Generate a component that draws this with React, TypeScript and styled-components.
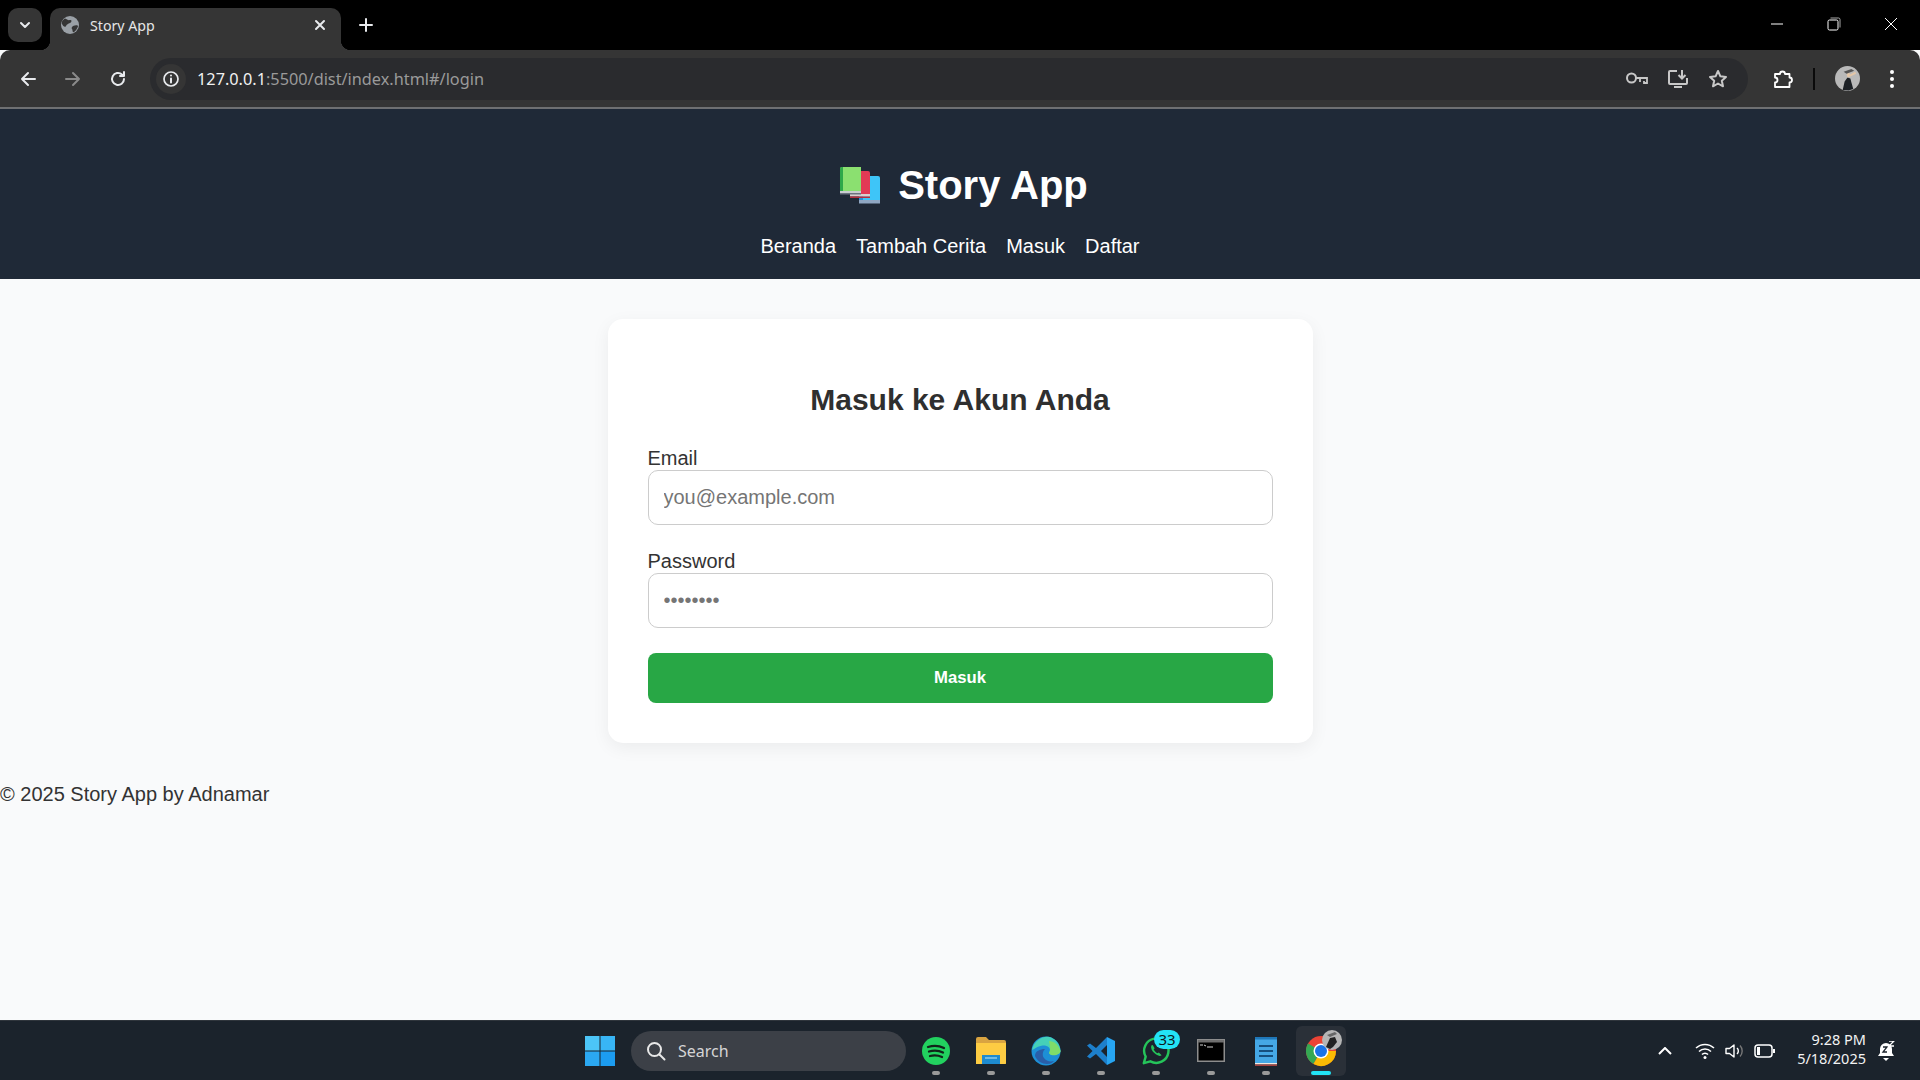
import React from "react";
import styled, { createGlobalStyle } from "styled-components";

const Global = createGlobalStyle`
  html, body { margin: 0; padding: 0; background: #f9fafb; }
  * { box-sizing: border-box; }
  body { font-family: "Liberation Sans", Arial, sans-serif; color: #333; overflow: hidden; }
`;

const Screen = styled.div`
  width: 1920px; height: 1080px; display: flex; flex-direction: column; background: #f9fafb;
`;

/* ---------- browser chrome ---------- */
const TabStrip = styled.div`
  height: 50px; flex: none; background: #000; display: flex; align-items: flex-start;
  font-family: "Noto Sans", "Open Sans", sans-serif;
`;
const TabSearch = styled.div`
  width: 34px; height: 34px; margin: 8px 0 0 8px; border-radius: 10px; background: #353535;
  display: flex; align-items: center; justify-content: center; flex: none;
`;
const Tab = styled.div`
  width: 291px; height: 42px; margin: 8px 0 0 8px; border-radius: 10px 10px 0 0; background: #353535; position: relative;
  display: flex; align-items: center; padding: 0 15px 8px 11px; color: #e6e6e6; font-size: 14.2px; gap: 11px; flex: none;
  &::before, &::after {
    content: ""; position: absolute; bottom: 0; width: 10px; height: 10px;
  }
  &::before { left: -10px; background: radial-gradient(circle at 0 0, transparent 10px, #353535 10.5px); }
  &::after { right: -10px; background: radial-gradient(circle at 100% 0, transparent 10px, #353535 10.5px); }
`;
const TabTitle = styled.span` flex: 1; `;
const NewTab = styled.div`
  width: 28px; height: 28px; margin: 11px 0 0 11px; display: flex; align-items: center; justify-content: center; flex: none;
`;
const WindowControls = styled.div`
  margin-left: auto; display: flex; height: 48px; align-items: center; padding-right: 1px;
`;
const WinBtn = styled.div`
  width: 57px; height: 48px; display: flex; align-items: center; justify-content: center;
`;

const Toolbar = styled.div`
  height: 59px; flex: none; background: #353535; border-radius: 10px 10px 0 0; border-bottom: 2px solid #6f7072;
  display: flex; align-items: center; padding: 0 26px 0 0;
`;
const NavIcon = styled.div`
  width: 45px; height: 34px; display: flex; align-items: center; justify-content: center; flex: none;
`;
const NavGroup = styled.div` display: flex; padding-left: 5px; `;
const Omnibox = styled.div`
  flex: 1; height: 42px; margin-left: 10px; background: #2a2b2e; border-radius: 21px; display: flex; align-items: center;
  font-family: "Noto Sans", "Open Sans", sans-serif; font-size: 16.3px; padding-right: 20px;
`;
const InfoChip = styled.div`
  width: 30px; height: 30px; margin-left: 6px; border-radius: 50%; background: #353535; display: flex; align-items: center; justify-content: center; flex: none;
`;
const UrlHost = styled.span` color: #f1f1f1; margin-left: 11px; `;
const UrlRest = styled.span` color: #9a9a9a; `;
const OmniActions = styled.div` margin-left: auto; display: flex; align-items: center; gap: 20px; `;
const ToolRight = styled.div` display: flex; align-items: center; flex: none; margin-left: 25px; `;
const ToolDivider = styled.div` width: 2px; height: 22px; background: #0a0a0a; margin: 0 20px; `;
const Kebab = styled.div` margin-left: 30px; display: flex; `;

/* ---------- app header ---------- */
const Header = styled.header`
  height: 170px; flex: none; background: #1f2937; color: #fff; display: flex; flex-direction: column; align-items: center; padding-top: 53px;
`;
const Brand = styled.h1`
  margin: 0; padding-left: 8px; font-size: 40px; line-height: 46px; font-weight: 700; display: flex; align-items: center; gap: 18px; color: #fff;
`;
const Nav = styled.nav`
  display: flex; gap: 20px; margin-top: 27px; padding-right: 20px;
`;
const NavLink = styled.a`
  color: #fff; font-size: 20px; line-height: 23px; text-decoration: none;
`;

/* ---------- login ---------- */
const Main = styled.main`
  display: flex; justify-content: center; padding-top: 40px; flex: none;
`;
const Card = styled.section`
  width: 705px; background: #fff; border-radius: 15px; padding: 40px; box-shadow: 0 5px 18px rgba(0,0,0,0.06);
`;
const Title = styled.h2`
  margin: 23.5px 0 30.5px; text-align: center; font-size: 30px; line-height: 34px; font-weight: 700; color: #2f2f2f;
`;
const Field = styled.div` margin-bottom: 25px; `;
const Label = styled.label` display: block; font-size: 20px; line-height: 23px; color: #333; `;
const Input = styled.input`
  display: block; width: 100%; height: 55px; padding: 0 15px; border: 1px solid #ccc; border-radius: 10px;
  font-family: "Liberation Sans", Arial, sans-serif; font-size: 20px; color: #333; background: #fff; outline: none;
  &::placeholder { color: #757575; }
`;
const Submit = styled.button`
  display: block; width: 100%; height: 50px; border: 0; border-radius: 8px; background: #28a745; color: #fff;
  font-family: "Liberation Sans", Arial, sans-serif; font-size: 16.7px; font-weight: 700;
`;
const Footer = styled.footer`
  margin-top: 39.5px; font-size: 20px; line-height: 23px; color: #333; flex: none;
`;
const Spacer = styled.div` flex: 1; `;

/* ---------- taskbar ---------- */
const Taskbar = styled.div`
  height: 60px; flex: none; background: #1b232c; border-top: 1px solid #2f353c; position: relative; display: flex; align-items: center; justify-content: center;
  font-family: "Noto Sans", "Open Sans", sans-serif;
`;
const TaskCenter = styled.div` display: flex; align-items: center; margin-left: 13.5px; `;
const StartBtn = styled.div` width: 30px; height: 30px; display: flex; margin-right: 16px; `;
const SearchPill = styled.div`
  width: 275px; height: 40px; border-radius: 20px; background: #3c4047; color: #d5d5d5; display: flex; align-items: center; gap: 12px; padding-left: 15px; font-size: 16px; margin-right: 2.5px;
`;
const AppSlot = styled.div<{ $active?: boolean }>`
  width: 50px; height: 50px; margin: 0 2.5px; position: relative; display: flex; align-items: center; justify-content: center; border-radius: 6px;
  background: ${(p) => (p.$active ? "#2a3038" : "transparent")};
`;
const AppDot = styled.span<{ $active?: boolean }>`
  position: absolute; left: 50%; bottom: 1px; transform: translateX(-50%);
  width: ${(p) => (p.$active ? "20px" : "8px")}; height: 4px; border-radius: 2px; background: ${(p) => (p.$active ? "#22e3f5" : "#9a9a9a")};
`;
const Badge = styled.span`
  position: absolute; top: 4px; right: 1px; min-width: 26px; height: 19px; border-radius: 10px; background: #23e3f5; color: #0d1b22; font-size: 15px; display: flex; align-items: center; justify-content: center;
`;
const Tray = styled.div`
  position: absolute; right: 0; top: 0; bottom: 0; display: flex; align-items: center; color: #fff; padding-right: 25px;
`;
const TrayIcons = styled.div` display: flex; align-items: center; gap: 9.5px; margin-right: 21px; `;
const Chevron = styled.div` margin-right: 23px; display: flex; `;
const Clock = styled.div` text-align: right; font-size: 14.5px; line-height: 19.500px; margin-right: 11px; color: #f3f3f3; padding-bottom: 3px; `;

const Globe = () => (
  <svg width="18" height="18" viewBox="0 0 18 18"><circle cx="9" cy="9" r="9" fill="#9aa0a6" /><path d="M4 2.500c2 1 3 2 5 1.500s2 2 0 3-3 1-4 3-3 0-4-2 1-4 3-5.500zM12 10c2-1 5-1 5 0s-2 5-4 6-1-2-2-3 0-2 1-3z" fill="#353535" /></svg>
);
const Avatar = () => (
  <svg width="25" height="25" viewBox="0 0 26 26">
    <circle cx="13" cy="13" r="13" fill="#b9b9b9" />
    <path d="M8 25l2-9 3-4 3 1 1 4 2 7-5 1.500z" fill="#1d2126" />
    <path d="M12 8l3-1 1 4-3 1zM15 9l6-3 1 2-6 3z" fill="#e3c6a8" />
    <path d="M9 6l8-3 3 2-8 3z" fill="#555" />
  </svg>
);
const Books = () => (
  <svg width="40" height="37" viewBox="0 0 40 37">
    <path d="M20 9h18a2 2 0 0 1 2 2v24H20z" fill="#3ec5f8" /><path d="M19 9h4v24h-4z" fill="#2a8fd8" /><path d="M19 33h21v3.500H19z" fill="#8fa6c2" />
    <path d="M10 4h18a2 2 0 0 1 2 2v21H10z" fill="#e23a55" /><path d="M10 27h20v2.500H10z" fill="#d8cfcf" /><path d="M10 29.500h20v1.500H10z" fill="#b32f3f" />
    <path d="M2 0h19v24H0V2a2 2 0 0 1 2-2z" fill="#8be070" /><path d="M2 0h1v24H0V2a2 2 0 0 1 2-2z" fill="#2fa84a" /><path d="M0 24h21v2H0z" fill="#c9ccd0" /><path d="M0 26h21v1.500H0z" fill="#6b7280" />
  </svg>
);
const ic = { fill: "none", stroke: "#e8eaed", strokeWidth: 2, strokeLinecap: "round" as const, strokeLinejoin: "round" as const };

export default function App() {
  return (
    <Screen>
      <Global />
      <TabStrip>
        <TabSearch><svg width="12" height="12" viewBox="0 0 12 12"><path d="M2 4l4 4 4-4" {...ic} /></svg></TabSearch>
        <Tab>
          <Globe />
          <TabTitle>Story App</TabTitle>
          <svg width="12" height="12" viewBox="0 0 12 12"><path d="M2 2l8 8M10 2l-8 8" {...ic} /></svg>
        </Tab>
        <NewTab><svg width="14" height="14" viewBox="0 0 14 14"><path d="M7 1v12M1 7h12" {...ic} /></svg></NewTab>
        <WindowControls>
          <WinBtn><svg width="14" height="14" viewBox="0 0 14 14"><path d="M1 7h12" stroke="#fff" strokeWidth="1" /></svg></WinBtn>
          <WinBtn><svg width="14" height="14" viewBox="0 0 14 14"><rect x="1" y="3" width="10" height="10" rx="1.500" fill="none" stroke="#fff" /><path d="M3.500 1h8a1.500 1.500 0 0 1 1.500 1.500v8" fill="none" stroke="#aaa" /></svg></WinBtn>
          <WinBtn><svg width="14" height="14" viewBox="0 0 14 14"><path d="M1 1l12 12M13 1L1 13" stroke="#fff" strokeWidth="1" /></svg></WinBtn>
        </WindowControls>
      </TabStrip>
      <Toolbar>
        <NavGroup>
          <NavIcon><svg width="18" height="18" viewBox="0 0 18 18"><path d="M16 9H3M9 3L3 9l6 6" {...ic} /></svg></NavIcon>
          <NavIcon><svg width="18" height="18" viewBox="0 0 18 18"><path d="M2 9h13M9 3l6 6-6 6" {...ic} stroke="#8a8a8a" /></svg></NavIcon>
          <NavIcon><svg width="18" height="18" viewBox="0 0 18 18"><path d="M15 9a6 6 0 1 1-2-4.500L15 6M15 2v4h-4" {...ic} /></svg></NavIcon>
        </NavGroup>
        <Omnibox>
          <InfoChip><svg width="18" height="18" viewBox="0 0 18 18"><circle cx="9" cy="9" r="7" {...ic} strokeWidth="1.700" /><path d="M9 8.500v4M9 5.500v.1" {...ic} /></svg></InfoChip>
          <UrlHost>127.0.0.1</UrlHost><UrlRest>:5500/dist/index.html#/login</UrlRest>
          <OmniActions>
            <svg width="22" height="14" viewBox="0 0 22 14"><circle cx="5.500" cy="6" r="4.500" fill="none" stroke="#c8c8c8" strokeWidth="2" /><path d="M10 6h11v5h-3V9M14 7v3" fill="none" stroke="#c8c8c8" strokeWidth="1.800" /></svg>
            <svg width="20" height="20" viewBox="0 0 20 20"><path d="M9 2H2a1 1 0 0 0-1 1v11a1 1 0 0 0 1 1h16a1 1 0 0 0 1-1V9M6 18h8" fill="none" stroke="#c8c8c8" strokeWidth="2" /><path d="M14 1v8M10.500 6l3.500 3.500L17.500 6" fill="none" stroke="#c8c8c8" strokeWidth="2" /></svg>
            <svg width="20" height="20" viewBox="0 0 20 20"><path d="M10 2l2.400 5.300 5.600.6-4.200 3.800 1.200 5.600L10 14.500 5 17.300l1.200-5.600L2 7.900l5.600-.6z" fill="none" stroke="#c8c8c8" strokeWidth="2" strokeLinejoin="round" /></svg>
          </OmniActions>
        </Omnibox>
        <ToolRight>
          <svg width="20" height="20" viewBox="0 0 20 20"><path d="M2 5h5a2.500 2.500 0 0 1 5 0h4.500v3.500a2.500 2.500 0 0 1 0 5V18H2v-4.500a2.500 2.500 0 0 0 0-5z" fill="none" stroke="#fff" strokeWidth="1.800" strokeLinejoin="round" /></svg>
          <ToolDivider />
          <Avatar />
          <Kebab><svg width="4" height="18" viewBox="0 0 4 18"><circle cx="2" cy="2" r="2" fill="#fff" /><circle cx="2" cy="9" r="2" fill="#fff" /><circle cx="2" cy="16" r="2" fill="#fff" /></svg></Kebab>
        </ToolRight>
      </Toolbar>

      <Header>
        <Brand><Books />Story App</Brand>
        <Nav>
          <NavLink>Beranda</NavLink>
          <NavLink>Tambah Cerita</NavLink>
          <NavLink>Masuk</NavLink>
          <NavLink>Daftar</NavLink>
        </Nav>
      </Header>

      <Main>
        <Card>
          <Title>Masuk ke Akun Anda</Title>
          <Field>
            <Label>Email</Label>
            <Input placeholder="you@example.com" readOnly />
          </Field>
          <Field>
            <Label>Password</Label>
            <Input type="password" placeholder="••••••••" readOnly />
          </Field>
          <Submit>Masuk</Submit>
        </Card>
      </Main>
      <Footer>© 2025 Story App by Adnamar</Footer>
      <Spacer />

      <Taskbar>
        <TaskCenter>
          <StartBtn><svg width="30" height="30" viewBox="0 0 30 30"><path d="M0 0h14.500v14.500H0z" fill="#4cc5f7" /><path d="M15.500 0H30v14.500H15.500z" fill="#38b5f5" /><path d="M0 15.500h14.500V30H0z" fill="#2ba8f2" /><path d="M15.500 15.500H30V30H15.500z" fill="#1c9cf0" /></svg></StartBtn>
          <SearchPill>
            <svg width="20" height="20" viewBox="0 0 20 20"><circle cx="8.500" cy="8.500" r="6.500" fill="none" stroke="#e8e8e8" strokeWidth="2" /><path d="M13.500 13.500l5 5" stroke="#e8e8e8" strokeWidth="2" strokeLinecap="round" /></svg>
            Search
          </SearchPill>
          <AppSlot>
            <svg width="30" height="30" viewBox="0 0 30 30"><circle cx="15" cy="15" r="14" fill="#22d15f" /><path d="M7 11c6-2 11-1.500 16 1M8 15.500c5-1.500 10-1 14 1M9 20c4-1 8-.8 12 1" fill="none" stroke="#12231a" strokeWidth="2.300" strokeLinecap="round" /></svg>
            <AppDot />
          </AppSlot>
          <AppSlot>
            <svg width="30" height="27" viewBox="0 0 30 27"><path d="M0 2a2 2 0 0 1 2-2h8l3 3h15a2 2 0 0 1 2 2v21a1 1 0 0 1-1 1H0z" fill="#d9a441" /><path d="M0 6h30v20a1 1 0 0 1-1 1H0z" fill="#fdcc43" /><path d="M6 18h18v9H6z" fill="#1e8bd0" /><path d="M9 21h12" stroke="#8ccbee" strokeWidth="1.500" /></svg>
            <AppDot />
          </AppSlot>
          <AppSlot>
            <svg width="30" height="30" viewBox="0 0 30 30"><circle cx="15" cy="15" r="14.500" fill="#1d8fd6" /><path d="M1 14C3 4 12 0 17 .8c7 1 12 7 12.500 14 .2 3-5 5-9 4-2-.5-3-2-2-3 2-4-3-7-8-6S2 14 1 14z" fill="#45d0b8" /><path d="M18 5c5 0 10 4 11.500 10 0 3-5 5-9 4-2-.5-3-2-2-3 1.500-3 0-7-.5-11z" fill="#7fdc6a" /><path d="M4 20c2 5 7 8 12 8 4 0 6-2 7-3-4 1-8 0-10-3-2-2-1.500-7 1-9-5 0-10 2-10 7z" fill="#2a5ea8" /></svg>
            <AppDot />
          </AppSlot>
          <AppSlot>
            <svg width="30" height="30" viewBox="0 0 30 30"><path d="M21 1L10 12 4 7.500 1 9.500 6.500 15 1 20.500l3 2 6-4.500 11 11z" fill="#1d7fcb" /><path d="M21 1l8 4v20l-8 4z" fill="#27a5f2" /><path d="M21 9v12l-6-6z" fill="#1b232c" /></svg>
            <AppDot />
          </AppSlot>
          <AppSlot>
            <svg width="30" height="30" viewBox="0 0 32 32"><path d="M3 29l2-7A13 13 0 1 1 10 27z" fill="none" stroke="#25c45a" strokeWidth="2.600" strokeLinejoin="round" /><path d="M11 10c-1 3 1 6 3.500 8.500S20 22 22 20.500l-3-3-1.500 1c-2-1-3-2.500-4-4l1-1.500-2-3.500z" fill="#25c45a" /></svg>
            <Badge>33</Badge>
            <AppDot />
          </AppSlot>
          <AppSlot>
            <svg width="28" height="23" viewBox="0 0 28 23"><rect x="0.750" y="0.750" width="26.500" height="21.500" fill="#000" stroke="#8d8d8d" strokeWidth="1.500" /><path d="M1 1h26v2.500H1z" fill="#6f6f6f" /><path d="M3 6h3M7 6l2 1M10 8h6" stroke="#d0d0d0" strokeWidth="1" /></svg>
            <AppDot />
          </AppSlot>
          <AppSlot>
            <svg width="22" height="30" viewBox="0 0 22 30"><path d="M0 2h22v25H0z" fill="#45a8e6" /><path d="M0 27h22v1.500H0z" fill="#f0e8e0" /><path d="M0 28.500h22V30H0z" fill="#a3403e" /><path d="M0 1h22v2.500H0z" fill="#1f77b8" /><path d="M4 10h14M4 15h14M4 20h14" stroke="#16507f" strokeWidth="2" /></svg>
            <AppDot />
          </AppSlot>
          <AppSlot $active>
            <svg width="50" height="50" viewBox="0 0 50 50">
              <circle cx="25" cy="25" r="15" fill="#ea4335" />
              <path d="M25 25L12 17.500A15 15 0 0 0 17.500 38z" fill="#34a853" />
              <path d="M25 25H40A15 15 0 0 1 17.500 38z" fill="#fbbc04" />
              <circle cx="25" cy="25" r="7.500" fill="#fff" /><circle cx="25" cy="25" r="6" fill="#1a73e8" />
              <circle cx="36" cy="14" r="10" fill="#b5b5b5" /><path d="M30 21l4-9 5-1 2 5-4 5-3 2z" fill="#222" /><path d="M31 9l8-3 2 2-7 3z" fill="#666" />
            </svg>
            <AppDot $active />
          </AppSlot>
        </TaskCenter>
        <Tray>
          <Chevron><svg width="14" height="8" viewBox="0 0 14 8"><path d="M1 7l6-6 6 6" fill="none" stroke="#fff" strokeWidth="2" /></svg></Chevron>
          <TrayIcons>
            <svg width="20" height="16" viewBox="0 0 20 16"><path d="M1 5a13 13 0 0 1 18 0M4 8.500a8.500 8.500 0 0 1 12 0M7 11.500a4 4 0 0 1 6 0" fill="none" stroke="#fff" strokeWidth="1.500" /><circle cx="10" cy="14.500" r="1.500" fill="#fff" /></svg>
            <svg width="20" height="16" viewBox="0 0 20 16"><path d="M1 5.500h3.500L9 2v12L4.500 10.500H1z" fill="none" stroke="#fff" strokeWidth="1.400" strokeLinejoin="round" /><path d="M12 5a4 4 0 0 1 0 6" fill="none" stroke="#fff" strokeWidth="1.400" /><path d="M15 2.500a8 8 0 0 1 0 11" fill="none" stroke="#777" strokeWidth="1.400" /></svg>
            <svg width="22" height="14" viewBox="0 0 22 14"><rect x="1" y="1" width="17" height="12" rx="3" fill="none" stroke="#fff" strokeWidth="1.500" /><rect x="3" y="3" width="3" height="8" fill="#fff" /><path d="M20 5v4" stroke="#fff" strokeWidth="2" /></svg>
          </TrayIcons>
          <Clock>9:28 PM<br />5/18/2025</Clock>
          <svg width="18" height="20" viewBox="0 0 18 20"><path d="M9 2a6 6 0 0 0-6 6v4l-2 3h16l-2-3V8a6 6 0 0 0-6-6z" fill="#fff" /><path d="M6 17h6l-3 3z" fill="#fff" /><path d="M6 6h4l-4 5h4" fill="none" stroke="#1b232c" strokeWidth="1.300" /><path d="M12 0h5l-5 5h5" fill="none" stroke="#fff" strokeWidth="1.300" /></svg>
        </Tray>
      </Taskbar>
    </Screen>
  );
}
